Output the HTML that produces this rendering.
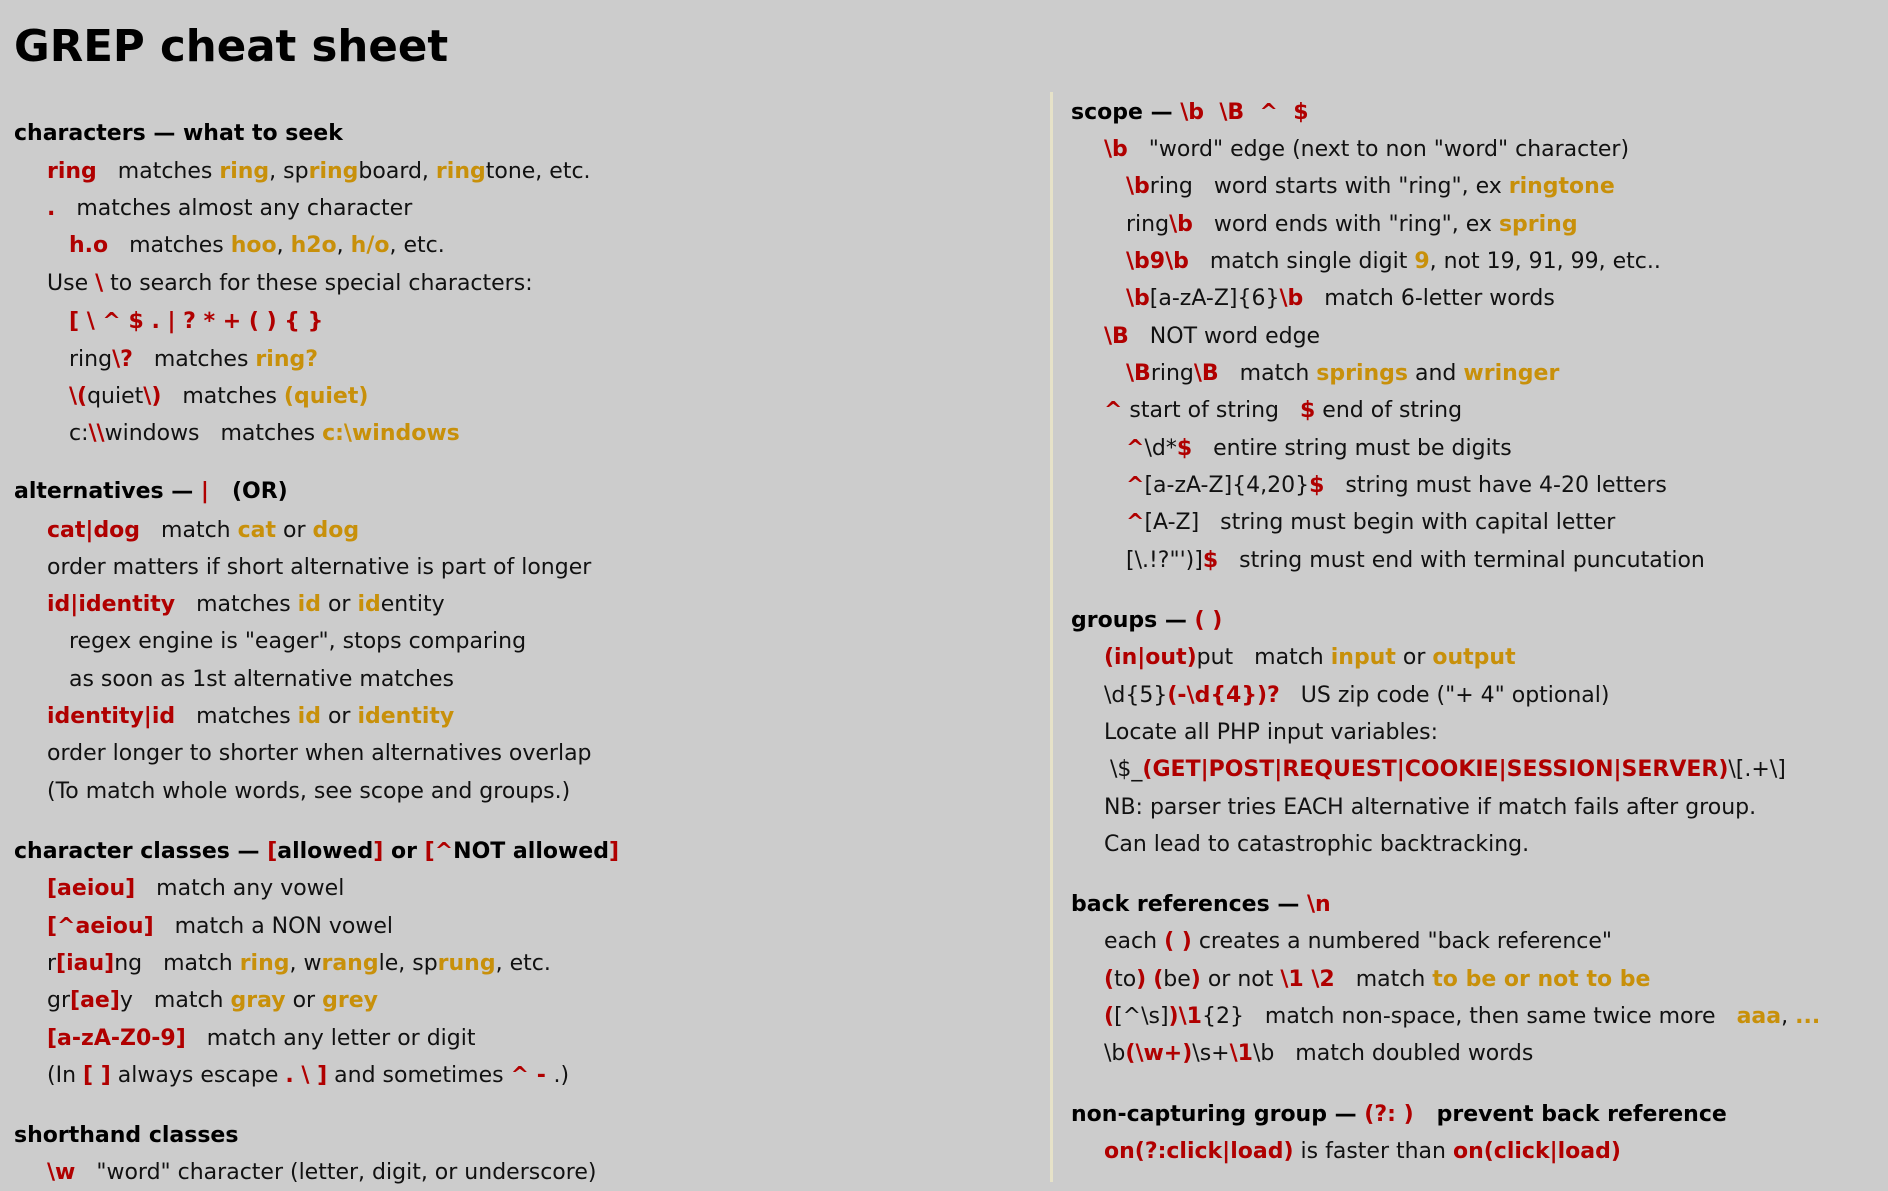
<!DOCTYPE html>
<html><head><meta charset="utf-8"><style>
html,body{margin:0;padding:0}
body{width:1888px;height:1176px;background:#cccccc;position:relative;overflow:hidden;font-family:"DejaVu Sans","Liberation Sans",sans-serif;font-size:22px;color:#111}
#w{position:absolute;left:0;top:2px;width:1888px;height:1176px}
.l{position:absolute;line-height:36px;height:36px;white-space:pre}
.h{font-weight:bold;color:#000}
.r{color:#b00000;font-weight:bold}
.g{color:#c8900a;font-weight:bold}
h1{position:absolute;left:14px;top:13px;margin:0;font-size:43.5px;font-weight:bold;color:#000;line-height:64px}
.div{position:absolute;left:1050px;top:90px;width:3px;height:1090px;background:#e6e2c8}
</style></head><body><div id="w">
<h1>GREP cheat sheet</h1>
<div class="div"></div>

<div class="l h" style="left:14px;top:114px">characters — what to seek</div>
<div class="l" style="left:47px;top:152px"><span class="r">ring</span>   matches <span class="g">ring</span>, sp<span class="g">ring</span>board, <span class="g">ring</span>tone, etc.</div>
<div class="l" style="left:47px;top:189px"><span class="r">.</span>   matches almost any character</div>
<div class="l" style="left:69px;top:226px"><span class="r">h.o</span>   matches <span class="g">hoo</span>, <span class="g">h2o</span>, <span class="g">h/o</span>, etc.</div>
<div class="l" style="left:47px;top:264px">Use <span class="r">\</span> to search for these special characters:</div>
<div class="l" style="left:69px;top:302px"><span class="r">[ \ ^ $ . | ? * + ( ) { }</span></div>
<div class="l" style="left:69px;top:340px">ring<span class="r">\?</span>   matches <span class="g">ring?</span></div>
<div class="l" style="left:69px;top:377px"><span class="r">\(</span>quiet<span class="r">\)</span>   matches <span class="g">(quiet)</span></div>
<div class="l" style="left:69px;top:414px">c:<span class="r">\\</span>windows   matches <span class="g">c:\windows</span></div>

<div class="l h" style="left:14px;top:472px">alternatives — <span class="r">|</span>   (OR)</div>
<div class="l" style="left:47px;top:511px"><span class="r">cat|dog</span>   match <span class="g">cat</span> or <span class="g">dog</span></div>
<div class="l" style="left:47px;top:548px">order matters if short alternative is part of longer</div>
<div class="l" style="left:47px;top:585px"><span class="r">id|identity</span>   matches <span class="g">id</span> or <span class="g">id</span>entity</div>
<div class="l" style="left:69px;top:622px">regex engine is "eager", stops comparing</div>
<div class="l" style="left:69px;top:660px">as soon as 1st alternative matches</div>
<div class="l" style="left:47px;top:697px"><span class="r">identity|id</span>   matches <span class="g">id</span> or <span class="g">identity</span></div>
<div class="l" style="left:47px;top:734px">order longer to shorter when alternatives overlap</div>
<div class="l" style="left:47px;top:772px">(To match whole words, see scope and groups.)</div>

<div class="l h" style="left:14px;top:832px">character classes — <span class="r">[</span>allowed<span class="r">]</span> or <span class="r">[^</span>NOT allowed<span class="r">]</span></div>
<div class="l" style="left:47px;top:869px"><span class="r">[aeiou]</span>   match any vowel</div>
<div class="l" style="left:47px;top:907px"><span class="r">[^aeiou]</span>   match a NON vowel</div>
<div class="l" style="left:47px;top:944px">r<span class="r">[iau]</span>ng   match <span class="g">ring</span>, w<span class="g">rang</span>le, sp<span class="g">rung</span>, etc.</div>
<div class="l" style="left:47px;top:981px">gr<span class="r">[ae]</span>y   match <span class="g">gray</span> or <span class="g">grey</span></div>
<div class="l" style="left:47px;top:1019px"><span class="r">[a-zA-Z0-9]</span>   match any letter or digit</div>
<div class="l" style="left:47px;top:1056px">(In <span class="r">[ ]</span> always escape <span class="r">. \ ]</span> and sometimes <span class="r">^ - </span>.)</div>

<div class="l h" style="left:14px;top:1116px">shorthand classes</div>
<div class="l" style="left:47px;top:1153px"><span class="r">\w</span>   "word" character (letter, digit, or underscore)</div>

<div class="l h" style="left:1071px;top:93px">scope — <span class="r">\b  \B  ^  $</span></div>
<div class="l" style="left:1104px;top:130px"><span class="r">\b</span>   "word" edge (next to non "word" character)</div>
<div class="l" style="left:1126px;top:167px"><span class="r">\b</span>ring   word starts with "ring", ex <span class="g">ringtone</span></div>
<div class="l" style="left:1126px;top:205px">ring<span class="r">\b</span>   word ends with "ring", ex <span class="g">spring</span></div>
<div class="l" style="left:1126px;top:242px"><span class="r">\b9\b</span>   match single digit <span class="g">9</span>, not 19, 91, 99, etc..</div>
<div class="l" style="left:1126px;top:279px"><span class="r">\b</span>[a-zA-Z]{6}<span class="r">\b</span>   match 6-letter words</div>
<div class="l" style="left:1104px;top:317px"><span class="r">\B</span>   NOT word edge</div>
<div class="l" style="left:1126px;top:354px"><span class="r">\B</span>ring<span class="r">\B</span>   match <span class="g">springs</span> and <span class="g">wringer</span></div>
<div class="l" style="left:1104px;top:391px"><span class="r">^</span> start of string   <span class="r">$</span> end of string</div>
<div class="l" style="left:1126px;top:429px"><span class="r">^</span>\d*<span class="r">$</span>   entire string must be digits</div>
<div class="l" style="left:1126px;top:466px"><span class="r">^</span>[a-zA-Z]{4,20}<span class="r">$</span>   string must have 4-20 letters</div>
<div class="l" style="left:1126px;top:503px"><span class="r">^</span>[A-Z]   string must begin with capital letter</div>
<div class="l" style="left:1126px;top:541px">[\.!?"')]<span class="r">$</span>   string must end with terminal puncutation</div>

<div class="l h" style="left:1071px;top:601px">groups — <span class="r">( )</span></div>
<div class="l" style="left:1104px;top:638px"><span class="r">(in|out)</span>put   match <span class="g">input</span> or <span class="g">output</span></div>
<div class="l" style="left:1104px;top:676px">\d{5}<span class="r">(-\d{4})?</span>   US zip code ("+ 4" optional)</div>
<div class="l" style="left:1104px;top:713px">Locate all PHP input variables:</div>
<div class="l" style="left:1110px;top:750px">\$_<span class="r">(GET|POST|REQUEST|COOKIE|SESSION|SERVER)</span>\[.+\]</div>
<div class="l" style="left:1104px;top:788px">NB: parser tries EACH alternative if match fails after group.</div>
<div class="l" style="left:1104px;top:825px">Can lead to catastrophic backtracking.</div>

<div class="l h" style="left:1071px;top:885px">back references — <span class="r">\n</span></div>
<div class="l" style="left:1104px;top:922px">each <span class="r">( )</span> creates a numbered "back reference"</div>
<div class="l" style="left:1104px;top:960px"><span class="r">(</span>to<span class="r">)</span> <span class="r">(</span>be<span class="r">)</span> or not <span class="r">\1 \2</span>   match <span class="g">to be or not to be</span></div>
<div class="l" style="left:1104px;top:997px"><span class="r">(</span>[^\s]<span class="r">)\1</span>{2}   match non-space, then same twice more   <span class="g">aaa</span>, <span class="g">...</span></div>
<div class="l" style="left:1104px;top:1034px">\b<span class="r">(\w+)</span>\s+<span class="r">\1</span>\b   match doubled words</div>

<div class="l h" style="left:1071px;top:1095px">non-capturing group — <span class="r">(?: )</span>   prevent back reference</div>
<div class="l" style="left:1104px;top:1132px"><span class="r">on(?:click|load)</span> is faster than <span class="r">on(click|load)</span></div>
</div></body></html>
